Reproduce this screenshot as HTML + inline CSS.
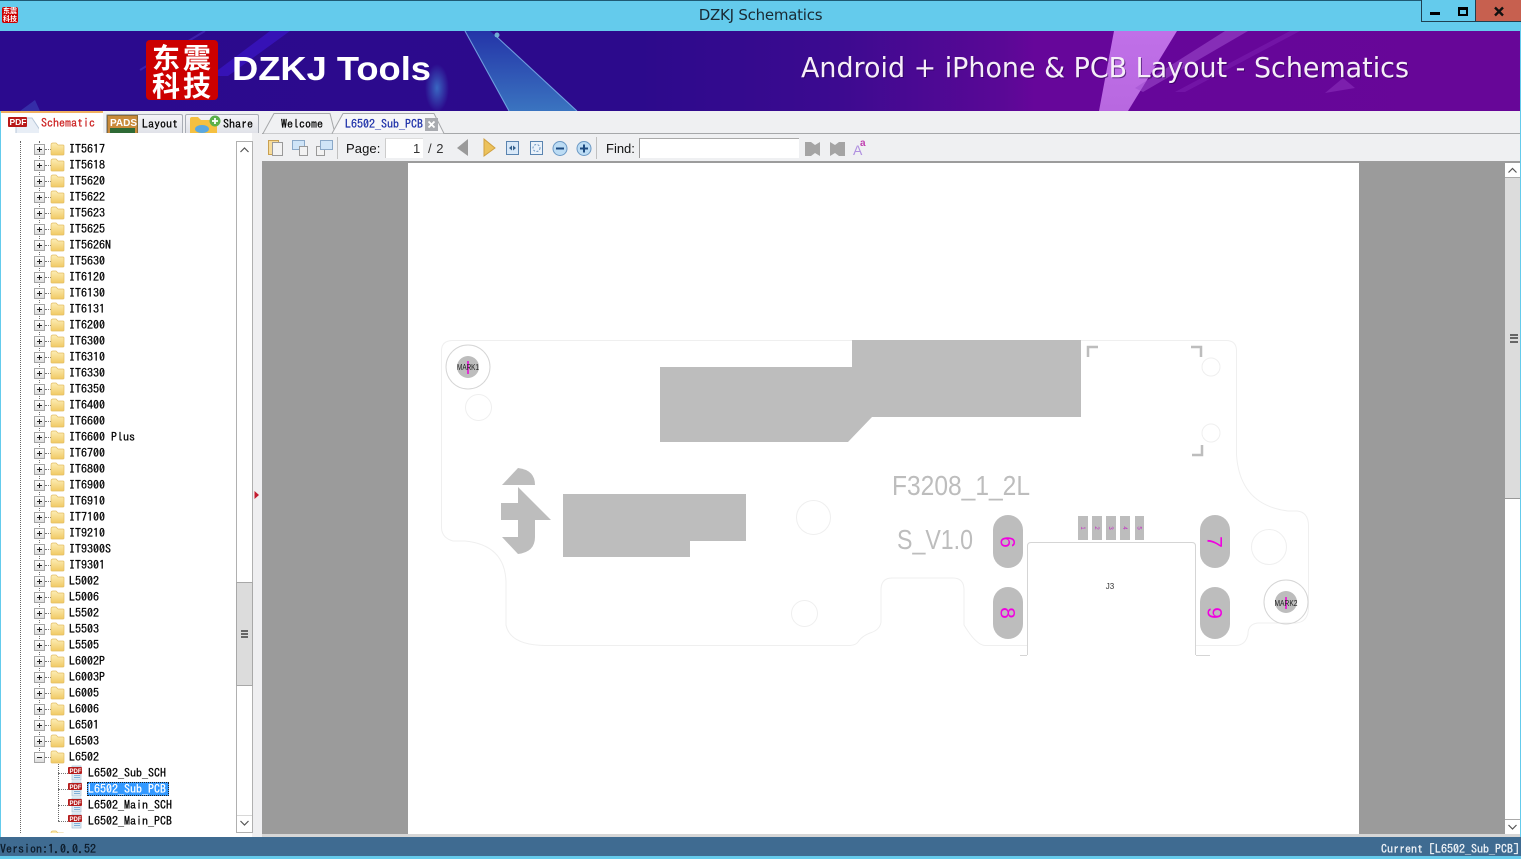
<!DOCTYPE html>
<html><head><meta charset="utf-8"><title>DZKJ Schematics</title>
<style>
html,body{margin:0;padding:0;width:1521px;height:859px;overflow:hidden;background:#f0f0f2}
*{box-sizing:border-box}
.a{position:absolute}
.m{font-family:"IPAGothic","Liberation Mono",monospace;font-size:12px;line-height:16px;white-space:pre;color:#000;-webkit-text-stroke:.25px currentColor}
.s{font-family:"Liberation Sans",sans-serif;font-size:13px;color:#111;white-space:pre}
#tree{position:absolute;left:1px;top:141px;width:235px;height:692px;overflow:hidden;background:#fff}
.r{position:absolute;left:0;height:16px;width:235px}
.r .b{position:absolute;left:33px;top:3px;width:11px;height:11px;border:1px solid #a5a5a5;background:linear-gradient(#fff,#ddd)}
.r .b::before{content:"";position:absolute;left:2px;top:4px;width:5px;height:1px;background:#222}
.r .p::after{content:"";position:absolute;left:4px;top:2px;width:1px;height:5px;background:#222}
.r .d{position:absolute;left:44px;top:8px;width:6px;border-top:1px dotted #777}
.r svg{position:absolute;left:49px;top:1px}
.r span{position:absolute;left:68px;top:0}
.vd{position:absolute;border-left:1px dotted #666;width:0}
.c svg{left:66px;top:0}
.c .d{left:57px;width:10px}
.c span{left:87px}
</style></head>
<body>
<svg width="0" height="0" style="position:absolute"><defs>
<linearGradient id="fg" x1="0" y1="0" x2="0" y2="1"><stop offset="0" stop-color="#fdeeb6"/><stop offset="1" stop-color="#f1c964"/></linearGradient>
<symbol id="f" viewBox="0 0 15 14"><path d="M1 3 Q1 1 3 1 H6 L8 3 H13 Q14 3 14 4 V12 Q14 13 13 13 H2 Q1 13 1 12Z" fill="url(#fg)" stroke="#e3bd63" stroke-width=".7"/></symbol>
<symbol id="pdf" viewBox="0 0 17 16"><path d="M5 1 H14 V15 H5Z" fill="#dfeaf3" stroke="#a9c2d6" stroke-width=".7"/><path d="M7 10.500 H13 M7 12.500 H13" stroke="#7fb0d8"/><rect x="1" y="2" width="14" height="7" rx="1" fill="#b51c1c"/><text x="2.500" y="8" font-family="Liberation Sans,sans-serif" font-size="6" font-weight="bold" fill="#fff" style="-webkit-text-stroke:0">PDF</text></symbol>
</defs></svg>

<!-- title bar -->
<div class="a" style="left:0;top:0;width:1521px;height:31px;background:#64cbec;border-top:1px solid #1f5a74"></div>
<div class="a" style="left:2px;top:7px;width:16px;height:16px;background:#c00;border-radius:2px;color:#fff;font:bold 7px/8px 'Noto Sans CJK SC',sans-serif;text-align:center">东震<br>科技</div>
<div class="a" style="left:0;top:6px;width:1521px;text-align:center;font:15px/18px 'DejaVu Sans','Liberation Sans',sans-serif;color:#1a2a33;letter-spacing:-.25px">DZKJ Schematics</div>
<div class="a" style="left:1421px;top:0;width:29px;height:22px;background:#64cbec;border:1px solid #1f3f50;border-top:0"></div>
<div class="a" style="left:1449px;top:0;width:27px;height:22px;background:#64cbec;border-right:1px solid #1f3f50;border-bottom:1px solid #1f3f50"></div>
<div class="a" style="left:1476px;top:0;width:45px;height:22px;background:#c7604f;border-bottom:1px solid #1f3f50"></div>
<div class="a" style="left:1430px;top:12px;width:10px;height:3px;background:#000"></div>
<div class="a" style="left:1458px;top:7px;width:10px;height:9px;border:2px solid #000;border-top-width:3px"></div>
<svg class="a" style="left:1493px;top:6px" width="12" height="11"><path d="M2 1.500 L10 9.500 M10 1.500 L2 9.500" stroke="#111" stroke-width="2.400"/></svg>

<!-- banner -->
<svg class="a" style="left:0;top:31px" width="1521" height="80" viewBox="0 31 1521 80">
<defs>
<linearGradient id="bg" x1="0" x2="1" y1="0" y2="0"><stop offset="0" stop-color="#2b0a8e"/><stop offset=".42" stop-color="#2c0a8c"/><stop offset=".55" stop-color="#3c0a90"/><stop offset=".66" stop-color="#5a0896"/><stop offset=".68" stop-color="#66069a"/><stop offset="1" stop-color="#670698"/></linearGradient>
<linearGradient id="tri" x1="0" x2="0" y1="0" y2="1"><stop offset="0" stop-color="#2434a8"/><stop offset="1" stop-color="#3a74c0"/></linearGradient>
<radialGradient id="gl"><stop offset="0" stop-color="#3f8fd8" stop-opacity=".7"/><stop offset="1" stop-color="#3f8fd8" stop-opacity="0"/></radialGradient>
<linearGradient id="rib" x1="0" x2="0" y1="0" y2="1"><stop offset="0" stop-color="#c070e8"/><stop offset="1" stop-color="#b868e0"/></linearGradient>
</defs>
<rect x="0" y="31" width="1521" height="80" fill="url(#bg)"/>
<path d="M290 31 L228 76 L210 76 L270 31Z" fill="#3a14c0" opacity=".8"/>
<path d="M205 31 L140 70" stroke="#4a30c0" stroke-width="2" opacity=".6"/>
<path d="M40 111 L20 111 L35 100Z" fill="#3f50c0" opacity=".5"/>
<ellipse cx="437" cy="88" rx="12" ry="24" fill="url(#gl)"/>
<path d="M465 31 L509 111 L577 111 L497 37 L490 31Z" fill="url(#tri)"/>
<path d="M465 31 L509 111 M497 37 L577 111" stroke="#7fb8ee" stroke-width="1.100" opacity=".8" fill="none"/>
<circle cx="497" cy="35" r="2.500" fill="#8ff0f0" opacity=".7"/>
<path d="M1114 31 L1177 31 L1128 111 L1099 111Z" fill="url(#rib)"/>
<path d="M1225 31 L1248 31 L1143 92 L1135 88Z" fill="#a050d0" opacity=".55"/>
<path d="M1290 31 L1300 31 L1185 92 L1175 92Z" fill="#8a30c0" opacity=".35"/>
<path d="M1343 78 L1355 88 L1325 93Z" fill="#7c1fad"/>
<rect x="146" y="40" width="72" height="60" rx="4" fill="#cc0000"/>
<text x="232" y="80" font-family="Liberation Sans,sans-serif" font-weight="bold" font-size="33" fill="#fff" textLength="199" lengthAdjust="spacingAndGlyphs">DZKJ Tools</text>
<text x="801" y="77" font-family="DejaVu Sans,sans-serif" font-size="28" fill="#28004f" opacity=".6" textLength="608" lengthAdjust="spacingAndGlyphs" transform="translate(1 1)">Android + iPhone &amp; PCB Layout - Schematics</text>
<text x="801" y="77" font-family="DejaVu Sans,sans-serif" font-size="28" fill="#f6eef8" textLength="608" lengthAdjust="spacingAndGlyphs">Android + iPhone &amp; PCB Layout - Schematics</text>
</svg>
<div class="a" style="left:150px;top:43px;width:64px;height:54px;color:#fff;font:bold 28px/28px 'Noto Sans CJK SC',sans-serif;text-align:center;letter-spacing:3px;white-space:nowrap;padding-left:2px">东震<br>科技</div>

<!-- tab bar -->
<div class="a" style="left:0;top:111px;width:1521px;height:50px;background:#eff0f2"></div>
<div class="a" style="left:262px;top:133px;width:1258px;height:1px;background:#a6a8aa"></div>
<div class="a" style="left:1px;top:111px;width:102px;height:23px;background:#fff;border-top:2px solid #f0b060"></div>
<div class="a" style="left:106px;top:114px;width:77px;height:20px;background:linear-gradient(#f5f5f8,#dfe1e8);border:1px solid #a9adb5;border-bottom:0;border-radius:2px 2px 0 0"></div>
<div class="a" style="left:185px;top:114px;width:74px;height:20px;background:linear-gradient(#f5f5f8,#dfe1e8);border:1px solid #a9adb5;border-bottom:0;border-radius:2px 2px 0 0"></div>
<svg class="a" style="left:5px;top:112px" width="34" height="22"><path d="M11 6 H27 L35 18 V22 H11Z" fill="#e8eef6" stroke="#b7c7d8"/><rect x="3" y="5" width="19" height="10" rx="1" fill="#b81818"/><text x="4.500" y="13" font-family="Liberation Sans,sans-serif" font-size="8.500" font-weight="bold" fill="#fff">PDF</text></svg>
<div class="a m" style="left:41px;top:115px;color:#c22">Schematic</div>
<svg class="a" style="left:107px;top:115px" width="32" height="19"><rect x="0.500" y="0.500" width="30" height="19" fill="#c98a3a" stroke="#8a6a35"/><text x="3" y="11" font-family="Liberation Sans,sans-serif" font-size="10" font-weight="bold" fill="#fff">PADS</text><rect x="3" y="13" width="25" height="6" fill="#2f6a35"/></svg>
<div class="a m" style="left:142px;top:116px">Layout</div>
<svg class="a" style="left:189px;top:114px" width="33" height="20"><path d="M1 5 Q1 3 3 3 H9 L12 6 H26 Q28 6 28 8 V20 H1Z" fill="#f5c040"/><ellipse cx="13" cy="15" rx="7" ry="4" fill="#5aa8e0"/><circle cx="26" cy="7" r="5.500" fill="#5bb04a"/><path d="M26 4 V10 M23 7 H29" stroke="#fff" stroke-width="1.800"/></svg>
<div class="a m" style="left:223px;top:116px">Share</div>
<svg class="a" style="left:262px;top:112px" width="190" height="22"><path d="M1 21.500 L12 1.500 H68 L73 21.500" fill="#f0f1f3" stroke="#a6a8aa"/><path d="M70 21.500 L81 1.500 H172 L182 21.500" fill="#f6f6f8" stroke="#a6a8aa"/></svg>
<div class="a m" style="left:281px;top:116px">Welcome</div>
<div class="a m" style="left:345px;top:116px;color:#1c2fa8">L6502_Sub_PCB</div>
<div class="a" style="left:425px;top:118px;width:13px;height:13px;background:#a9abb0"></div>
<svg class="a" style="left:425px;top:118px" width="13" height="13"><path d="M3.500 3.500 L9.500 9.500 M9.500 3.500 L3.500 9.500" stroke="#fff" stroke-width="1.800"/></svg>

<!-- tree -->
<div class="a" style="left:0;top:133px;width:262px;height:704px;background:#fff"></div>
<div class="a" style="left:252px;top:133px;width:10px;height:704px;background:#efeff1"></div>
<div id="tree" class="m">
<div class="vd" style="left:19px;top:0;height:692px"></div>
<div class="vd" style="left:38px;top:0;height:616px"></div>
<div class="vd" style="left:57px;top:623px;height:57px"></div>
<div class="r" style="top:0"><i class="b p"></i><i class="d"></i><svg width="15" height="14"><use href="#f"/></svg><span>IT5617</span></div>
<div class="r" style="top:16px"><i class="b p"></i><i class="d"></i><svg width="15" height="14"><use href="#f"/></svg><span>IT5618</span></div>
<div class="r" style="top:32px"><i class="b p"></i><i class="d"></i><svg width="15" height="14"><use href="#f"/></svg><span>IT5620</span></div>
<div class="r" style="top:48px"><i class="b p"></i><i class="d"></i><svg width="15" height="14"><use href="#f"/></svg><span>IT5622</span></div>
<div class="r" style="top:64px"><i class="b p"></i><i class="d"></i><svg width="15" height="14"><use href="#f"/></svg><span>IT5623</span></div>
<div class="r" style="top:80px"><i class="b p"></i><i class="d"></i><svg width="15" height="14"><use href="#f"/></svg><span>IT5625</span></div>
<div class="r" style="top:96px"><i class="b p"></i><i class="d"></i><svg width="15" height="14"><use href="#f"/></svg><span>IT5626N</span></div>
<div class="r" style="top:112px"><i class="b p"></i><i class="d"></i><svg width="15" height="14"><use href="#f"/></svg><span>IT5630</span></div>
<div class="r" style="top:128px"><i class="b p"></i><i class="d"></i><svg width="15" height="14"><use href="#f"/></svg><span>IT6120</span></div>
<div class="r" style="top:144px"><i class="b p"></i><i class="d"></i><svg width="15" height="14"><use href="#f"/></svg><span>IT6130</span></div>
<div class="r" style="top:160px"><i class="b p"></i><i class="d"></i><svg width="15" height="14"><use href="#f"/></svg><span>IT6131</span></div>
<div class="r" style="top:176px"><i class="b p"></i><i class="d"></i><svg width="15" height="14"><use href="#f"/></svg><span>IT6200</span></div>
<div class="r" style="top:192px"><i class="b p"></i><i class="d"></i><svg width="15" height="14"><use href="#f"/></svg><span>IT6300</span></div>
<div class="r" style="top:208px"><i class="b p"></i><i class="d"></i><svg width="15" height="14"><use href="#f"/></svg><span>IT6310</span></div>
<div class="r" style="top:224px"><i class="b p"></i><i class="d"></i><svg width="15" height="14"><use href="#f"/></svg><span>IT6330</span></div>
<div class="r" style="top:240px"><i class="b p"></i><i class="d"></i><svg width="15" height="14"><use href="#f"/></svg><span>IT6350</span></div>
<div class="r" style="top:256px"><i class="b p"></i><i class="d"></i><svg width="15" height="14"><use href="#f"/></svg><span>IT6400</span></div>
<div class="r" style="top:272px"><i class="b p"></i><i class="d"></i><svg width="15" height="14"><use href="#f"/></svg><span>IT6600</span></div>
<div class="r" style="top:288px"><i class="b p"></i><i class="d"></i><svg width="15" height="14"><use href="#f"/></svg><span>IT6600 Plus</span></div>
<div class="r" style="top:304px"><i class="b p"></i><i class="d"></i><svg width="15" height="14"><use href="#f"/></svg><span>IT6700</span></div>
<div class="r" style="top:320px"><i class="b p"></i><i class="d"></i><svg width="15" height="14"><use href="#f"/></svg><span>IT6800</span></div>
<div class="r" style="top:336px"><i class="b p"></i><i class="d"></i><svg width="15" height="14"><use href="#f"/></svg><span>IT6900</span></div>
<div class="r" style="top:352px"><i class="b p"></i><i class="d"></i><svg width="15" height="14"><use href="#f"/></svg><span>IT6910</span></div>
<div class="r" style="top:368px"><i class="b p"></i><i class="d"></i><svg width="15" height="14"><use href="#f"/></svg><span>IT7100</span></div>
<div class="r" style="top:384px"><i class="b p"></i><i class="d"></i><svg width="15" height="14"><use href="#f"/></svg><span>IT9210</span></div>
<div class="r" style="top:400px"><i class="b p"></i><i class="d"></i><svg width="15" height="14"><use href="#f"/></svg><span>IT9300S</span></div>
<div class="r" style="top:416px"><i class="b p"></i><i class="d"></i><svg width="15" height="14"><use href="#f"/></svg><span>IT9301</span></div>
<div class="r" style="top:432px"><i class="b p"></i><i class="d"></i><svg width="15" height="14"><use href="#f"/></svg><span>L5002</span></div>
<div class="r" style="top:448px"><i class="b p"></i><i class="d"></i><svg width="15" height="14"><use href="#f"/></svg><span>L5006</span></div>
<div class="r" style="top:464px"><i class="b p"></i><i class="d"></i><svg width="15" height="14"><use href="#f"/></svg><span>L5502</span></div>
<div class="r" style="top:480px"><i class="b p"></i><i class="d"></i><svg width="15" height="14"><use href="#f"/></svg><span>L5503</span></div>
<div class="r" style="top:496px"><i class="b p"></i><i class="d"></i><svg width="15" height="14"><use href="#f"/></svg><span>L5505</span></div>
<div class="r" style="top:512px"><i class="b p"></i><i class="d"></i><svg width="15" height="14"><use href="#f"/></svg><span>L6002P</span></div>
<div class="r" style="top:528px"><i class="b p"></i><i class="d"></i><svg width="15" height="14"><use href="#f"/></svg><span>L6003P</span></div>
<div class="r" style="top:544px"><i class="b p"></i><i class="d"></i><svg width="15" height="14"><use href="#f"/></svg><span>L6005</span></div>
<div class="r" style="top:560px"><i class="b p"></i><i class="d"></i><svg width="15" height="14"><use href="#f"/></svg><span>L6006</span></div>
<div class="r" style="top:576px"><i class="b p"></i><i class="d"></i><svg width="15" height="14"><use href="#f"/></svg><span>L6501</span></div>
<div class="r" style="top:592px"><i class="b p"></i><i class="d"></i><svg width="15" height="14"><use href="#f"/></svg><span>L6503</span></div>
<div class="r" style="top:608px"><i class="b"></i><i class="d"></i><svg width="15" height="14"><use href="#f"/></svg><span>L6502</span></div>
<div class="r c" style="top:624px"><i class="d"></i><svg width="17" height="16"><use href="#pdf"/></svg><span>L6502_Sub_SCH</span></div>
<div class="r c" style="top:640px"><i class="d"></i><svg width="17" height="16"><use href="#pdf"/></svg><div style="position:absolute;left:86px;top:1px;width:82px;height:14px;background:#3399ff;border:1px dotted #222"></div><span style="color:#fff">L6502_Sub_PCB</span></div>
<div class="r c" style="top:656px"><i class="d"></i><svg width="17" height="16"><use href="#pdf"/></svg><span>L6502_Main_SCH</span></div>
<div class="r c" style="top:672px"><i class="d"></i><svg width="17" height="16"><use href="#pdf"/></svg><span>L6502_Main_PCB</span></div>
<div class="r" style="top:688px"><svg width="15" height="14"><use href="#f"/></svg></div>
</div>
<!-- left scrollbar -->
<div class="a" style="left:236px;top:141px;width:17px;height:692px;background:#fff;border:1px solid #b0b0b0"></div>
<div class="a" style="left:236px;top:582px;width:17px;height:104px;background:#dcdcdc;border:1px solid #a8a8a8"></div>
<div class="a" style="left:241px;top:630px;width:7px;height:8px;border-top:2px solid #666;border-bottom:2px solid #666"></div>
<div class="a" style="left:242px;top:633px;width:7px;height:2px;background:#666;margin-left:-1px"></div>
<svg class="a" style="left:237px;top:142px" width="15" height="17"><path d="M3.500 10 L7.500 6 L11.500 10" fill="none" stroke="#555" stroke-width="1.200"/></svg>
<svg class="a" style="left:237px;top:815px" width="15" height="17"><path d="M3.500 6 L7.500 10 L11.500 6" fill="none" stroke="#555" stroke-width="1.200"/><path d="M0 0 H15" stroke="#b0b0b0"/></svg>
<svg class="a" style="left:254px;top:490px" width="6" height="10"><path d="M0.500 1 L5 5 L0.500 9Z" fill="#c41c30"/></svg>

<!-- toolbar -->
<svg class="a" style="left:262px;top:134px" width="640" height="28">
<g fill="#fff" stroke="#8aa8c8" stroke-width="1">
<rect x="6.500" y="6.500" width="10" height="14" fill="#f6dc9c" stroke="#c9a050"/><rect x="10.500" y="8.500" width="10" height="13" fill="#f2f2f2" stroke="#999"/>
<rect x="30.500" y="6.500" width="12" height="9" fill="#cfe4f7"/><rect x="37.500" y="12.500" width="8" height="9" fill="#f2f2f2" stroke="#999"/>
<rect x="54.500" y="12.500" width="8" height="9" fill="#f2f2f2" stroke="#999"/><rect x="58.500" y="6.500" width="12" height="9" fill="#cfe4f7"/>
</g>
<path d="M75.500 3 V25" stroke="#c0c0c0"/>
<path d="M195 14 L206 5 V22Z" fill="#9a9a9a"/>
<path d="M222 5 L233 14 L222 22Z" fill="#ecc25c" stroke="#d0a040"/>
<rect x="244.500" y="7.500" width="12" height="13" fill="#d8e8f8" stroke="#5a84b0"/><path d="M247 14 L250 11.500 V16.500Z M254 14 L251 11.500 V16.500Z" fill="#34608c"/>
<rect x="268.500" y="7.500" width="12" height="13" fill="#eaf2fa" stroke="#5a84b0"/><circle cx="274.500" cy="14" r="3.500" fill="none" stroke="#6a94c0" stroke-dasharray="2 1.500"/>
<circle cx="298" cy="14.500" r="7" fill="#bcdcf4" stroke="#6a98c4"/><path d="M294 14.500 H302" stroke="#1c4a80" stroke-width="2"/>
<circle cx="322" cy="14.500" r="7" fill="#bcdcf4" stroke="#6a98c4"/><path d="M318 14.500 H326 M322 10.500 V18.500" stroke="#1c4a80" stroke-width="2"/>
<path d="M334.500 3 V25" stroke="#c0c0c0"/>
<path d="M543 8 H549 L553 11 L558 8 V22 L553 19 L549 22 H543Z" fill="#a4a4a4"/>
<path d="M568 8 L573 11 L577 8 H583 V22 H577 L573 19 L568 22Z" fill="#a4a4a4"/>
<text x="591" y="21" font-family="Liberation Sans,sans-serif" font-size="14" fill="#b090e0">A</text>
<text x="598" y="12" font-family="Liberation Sans,sans-serif" font-size="10" fill="#c040b0" font-weight="bold">a</text>
</svg>
<div class="a s" style="left:346px;top:141px;letter-spacing:.1px">Page:</div>
<div class="a" style="left:385px;top:138px;width:38px;height:20px;background:#fff;border-left:1px solid #ccc;border-top:1px solid #ddd"></div>
<div class="a s" style="left:413px;top:141px;color:#333">1</div>
<div class="a s" style="left:428px;top:141px;color:#333;letter-spacing:.5px">/ 2</div>
<div class="a s" style="left:606px;top:141px">Find:</div>
<div class="a" style="left:639px;top:138px;width:160px;height:20px;background:#fff;border-left:1px solid #999;border-top:1px solid #aaa"></div>

<!-- viewer -->
<div class="a" style="left:262px;top:161px;width:1259px;height:2px;background:#9c9c9c"></div>
<div class="a" style="left:262px;top:163px;width:1243px;height:671px;background:#9b9b9b"></div>
<div class="a" style="left:408px;top:163px;width:951px;height:671px;background:#fff"></div>
<div class="a" style="left:262px;top:834px;width:1259px;height:3px;background:#d6d6d6"></div>

<svg class="a" style="left:0;top:0" width="1521" height="834" viewBox="0 0 1521 834">
<g fill="none" stroke="#efefef" stroke-width="1">
<path d="M1196 645.500 H1236 Q1246 645 1248 634 Q1248 624 1258 623 H1296 Q1308 622 1308.500 608 V525 Q1308 512 1297 511 H1288 Q1240 505 1236.500 455 V350 Q1236 340.500 1226 340.500 H452 Q442 341 441.500 350 V528 Q442 538 453 541 H465 Q505 545 506 582 V625 Q510 645 545 645.500 H850 Q856 645 858 642 Q862 636 870 633 Q880 630 881 622 V590 Q881 578 892 578 H953 Q964 578 964 590 V625 Q976 645 985 645.500 H1028"/>
<circle cx="478.500" cy="407.500" r="13"/><circle cx="813.500" cy="517.500" r="17"/><circle cx="804.500" cy="613.500" r="13"/><circle cx="1211" cy="367" r="9"/><circle cx="1211" cy="433" r="9"/><circle cx="1269" cy="547" r="17.500"/>
</g>
<g fill="#bdbdbd">
<path d="M660 367 H852 V340 H1081 V417 H872 L848 442 H660Z"/>
<path d="M563 494 H746 V541 H690 V557 H563Z"/>
<path d="M502 485 L518 468 Q535 470 535 485Z"/>
<path d="M501 503 H518 V487 L551 520 H535 V537 Q535 552 518 554 L502 537 H518 V520 H501Z"/>
<rect x="993" y="515" width="30" height="53" rx="15"/><rect x="993" y="587" width="30" height="52" rx="15"/>
<rect x="1200" y="515" width="30" height="53" rx="15"/><rect x="1200" y="587" width="30" height="52" rx="15"/>
<rect x="1078" y="516" width="10" height="24"/><rect x="1092" y="516" width="10" height="24"/><rect x="1106" y="516" width="10" height="24"/><rect x="1120" y="516" width="10" height="24"/><rect x="1135" y="516" width="9" height="24"/>
<circle cx="468" cy="367" r="11"/><circle cx="1286" cy="602" r="11"/>
</g>
<g fill="none" stroke="#bdbdbd" stroke-width="2.500">
<path d="M1088 357 V347 H1098"/><path d="M1191 347 H1201 V357"/><path d="M1202 445 V455 H1192"/>
</g>
<g fill="none" stroke="#d5d5d5" stroke-width="1">
<circle cx="468" cy="367" r="22"/><circle cx="1286" cy="602" r="22"/>
<path d="M1027.500 655 V546 Q1027.500 542.500 1031 542.500 H1192 Q1195.500 542.500 1195.500 546 V655"/>
<path d="M1020 655.500 H1027 M1196 655.500 H1210"/>
</g>
<g font-family="Liberation Sans,sans-serif" fill="#bdbdbd" font-size="28">
<text x="892" y="495" textLength="138" lengthAdjust="spacingAndGlyphs">F3208_1_2L</text>
<text x="897" y="549" textLength="76" lengthAdjust="spacingAndGlyphs">S_V1.0</text>
</g>
<g font-family="Liberation Sans,sans-serif" fill="#f000e0" font-size="21" text-anchor="middle">
<text transform="translate(1000.500 542) rotate(90)">6</text>
<text transform="translate(1000.500 613) rotate(90)">8</text>
<text transform="translate(1207.500 542) rotate(90)">7</text>
<text transform="translate(1207.500 613) rotate(90)">9</text>
</g>
<g font-family="Liberation Sans,sans-serif" fill="#c030c0" font-size="6" text-anchor="middle">
<text transform="translate(1081 528) rotate(90)">1</text>
<text transform="translate(1095 528) rotate(90)">2</text>
<text transform="translate(1109 528) rotate(90)">3</text>
<text transform="translate(1123 528) rotate(90)">4</text>
<text transform="translate(1137.500 528) rotate(90)">5</text>
</g>
<text x="1110" y="589" font-family="Liberation Sans,sans-serif" font-size="8" fill="#333" text-anchor="middle">J3</text>
<path d="M468 361 V374" stroke="#e030d0" stroke-width="2"/><path d="M1286 597 V609" stroke="#e030d0" stroke-width="2"/>
<text x="468" y="370" font-family="Liberation Sans,sans-serif" font-size="8.500" fill="#222" text-anchor="middle" textLength="22" lengthAdjust="spacingAndGlyphs">MARK1</text>
<text x="1286" y="606" font-family="Liberation Sans,sans-serif" font-size="8.500" fill="#222" text-anchor="middle" textLength="23" lengthAdjust="spacingAndGlyphs">MARK2</text>
</svg>

<!-- right scrollbar -->
<div class="a" style="left:1505px;top:163px;width:15px;height:671px;background:#dcdcdc"></div>
<div class="a" style="left:1505px;top:163px;width:15px;height:15px;background:#fff;border-bottom:1px solid #aaa"></div>
<div class="a" style="left:1505px;top:498px;width:15px;height:336px;background:#fff;border-top:1px solid #999"></div>
<div class="a" style="left:1505px;top:819px;width:15px;height:15px;background:#fff;border-top:1px solid #aaa"></div>
<svg class="a" style="left:1505px;top:163px" width="15" height="15"><path d="M3.500 9.500 L7.500 5.500 L11.500 9.500" fill="none" stroke="#555" stroke-width="1.200"/></svg>
<svg class="a" style="left:1505px;top:820px" width="15" height="14"><path d="M3.500 5 L7.500 9 L11.500 5" fill="none" stroke="#555" stroke-width="1.200"/></svg>
<div class="a" style="left:1510px;top:334px;width:8px;height:9px;border-top:2px solid #666;border-bottom:2px solid #666"></div>
<div class="a" style="left:1510px;top:337px;width:8px;height:2px;background:#666"></div>

<!-- status -->
<div class="a" style="left:0;top:837px;width:1521px;height:19px;background:#3f6b91"></div>
<div class="a" style="left:0;top:856px;width:1521px;height:3px;background:#64cbec"></div>
<div class="a m" style="left:0;top:841px;color:#0c1a28">Version:1.0.0.52</div>
<div class="a m" style="left:1381px;top:841px;color:#f0f4f8">Current [L6502_Sub_PCB]</div>
<div class="a" style="left:0;top:111px;width:1px;height:726px;background:#64cbec"></div>
<div class="a" style="left:1520px;top:31px;width:1px;height:806px;background:#64cbec"></div>
</body></html>
